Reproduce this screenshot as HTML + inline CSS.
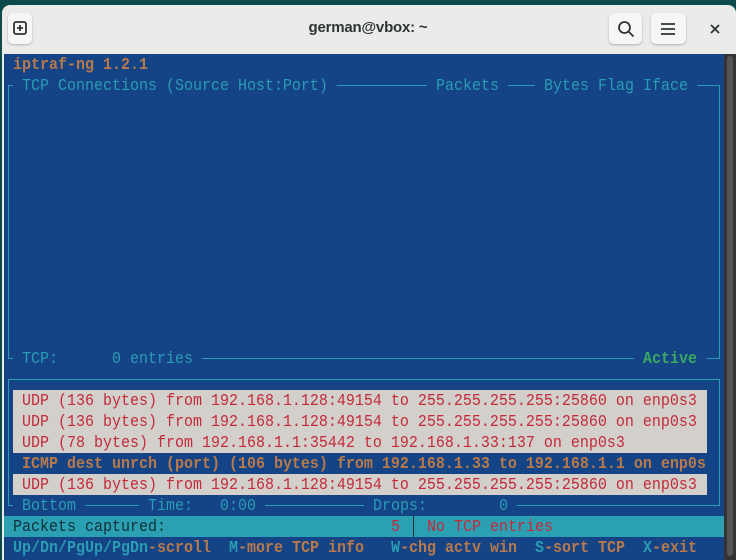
<!DOCTYPE html>
<html><head><meta charset="utf-8"><style>
*{margin:0;padding:0;box-sizing:border-box}
body{width:736px;height:560px;overflow:hidden;background:#0d4a4a;position:relative;font-family:"Liberation Mono",monospace}
.win{position:absolute;left:2px;top:5px;width:734px;height:555px;background:#ebebea;border-radius:8px 8px 0 0}
.btn{position:absolute;background:#f6f6f5;border-radius:5px;box-shadow:0 1px 2px rgba(0,0,0,.25)}
.title{position:absolute;left:0;width:736px;top:19px;text-align:center;font:15px "Liberation Sans",sans-serif;color:#2e3436;font-weight:bold;letter-spacing:-0.2px}
.term{position:absolute;left:4px;top:54px;width:720px;height:506px;background:#144386}
.sb{position:absolute;left:724px;top:54px;width:12px;height:506px;background:#333}
.t{position:absolute;font-size:17px;line-height:21px;padding-top:1px;white-space:pre;height:21px;transform:scaleX(.882);transform-origin:0 0}
.c{color:#2a9cb3}.o{color:#b87a4a;font-weight:bold}.r{color:#c42a3a}.g{color:#3aa860;font-weight:bold}
.ln{position:absolute;background:#2a9cb3}
.gr{position:absolute;left:13px;width:694px;height:21px;background:#d3d0cc}
</style></head><body>
<div class="win"></div>
<div class="btn" style="left:8px;top:13px;width:24px;height:31px"></div>
<svg style="position:absolute;left:12px;top:20px" width="16" height="16"><rect x="2" y="2" width="12" height="12" rx="2" fill="none" stroke="#2e3436" stroke-width="1.8"/><path d="M8 5v6M5 8h6" stroke="#2e3436" stroke-width="1.8"/></svg>
<div class="title">german@vbox: ~</div>
<div class="btn" style="left:609px;top:13px;width:33px;height:31px"></div>
<svg style="position:absolute;left:617px;top:20px" width="18" height="18"><circle cx="7.5" cy="7.5" r="5.5" fill="none" stroke="#2e3436" stroke-width="1.8"/><path d="M11.5 11.5l5 5" stroke="#2e3436" stroke-width="1.8"/></svg>
<div class="btn" style="left:651px;top:13px;width:35px;height:31px"></div>
<svg style="position:absolute;left:660px;top:21px" width="16" height="16"><path d="M1 3h14M1 8h14M1 13h14" stroke="#2e3436" stroke-width="1.8"/></svg>
<svg style="position:absolute;left:710px;top:24px" width="10" height="10"><path d="M1 1l8 8M9 1l-8 8" stroke="#2e3436" stroke-width="1.8"/></svg>

<div class="term"></div>
<div class="sb"><div style="position:absolute;left:3px;top:2px;width:6px;height:500px;background:#555;border-radius:3px"></div></div>

<div class="ln" style="left:8px;top:85px;width:712px;height:1px"></div>
<div class="ln" style="left:8px;top:85px;width:1px;height:274px"></div>
<div class="ln" style="left:719px;top:85px;width:1px;height:274px"></div>
<div class="ln" style="left:8px;top:358px;width:712px;height:1px"></div>
<div class="ln" style="left:8px;top:379px;width:712px;height:1px"></div>
<div class="ln" style="left:8px;top:379px;width:1px;height:127px"></div>
<div class="ln" style="left:719px;top:379px;width:1px;height:127px"></div>
<div class="ln" style="left:8px;top:505px;width:712px;height:1px"></div>

<div class="t o" style="left:13px;top:54px">iptraf-ng 1.2.1</div>
<div class="t c" style="left:13px;top:75px;background:#144386"> TCP Connections (Source Host:Port) </div>
<div class="t c" style="left:427px;top:75px;background:#144386"> Packets </div>
<div class="t c" style="left:535px;top:75px;background:#144386"> Bytes Flag Iface </div>

<div class="t c" style="left:13px;top:348px;background:#144386"> TCP:      0 entries </div>
<div class="t g" style="left:634px;top:348px;background:#144386"> Active </div>

<div class="gr" style="top:390px"></div>
<div class="gr" style="top:411px"></div>
<div class="gr" style="top:432px"></div>
<div class="gr" style="top:474px"></div>
<div class="t r" style="left:22px;top:390px">UDP (136 bytes) from 192.168.1.128:49154 to 255.255.255.255:25860 on enp0s3</div>
<div class="t r" style="left:22px;top:411px">UDP (136 bytes) from 192.168.1.128:49154 to 255.255.255.255:25860 on enp0s3</div>
<div class="t r" style="left:22px;top:432px">UDP (78 bytes) from 192.168.1.1:35442 to 192.168.1.33:137 on enp0s3</div>
<div class="t o" style="left:22px;top:453px">ICMP dest unrch (port) (106 bytes) from 192.168.1.33 to 192.168.1.1 on enp0s</div>
<div class="t r" style="left:22px;top:474px">UDP (136 bytes) from 192.168.1.128:49154 to 255.255.255.255:25860 on enp0s3</div>

<div class="t c" style="left:13px;top:495px;background:#144386"> Bottom </div>
<div class="t c" style="left:139px;top:495px;background:#144386"> Time:   0:00 </div>
<div class="t c" style="left:364px;top:495px;background:#144386"> Drops:        0 </div>

<div style="position:absolute;left:4px;top:516px;width:720px;height:21px;background:#2aa0b2"></div>
<div class="t" style="left:13px;top:516px;color:#10303a">Packets captured:</div>
<div class="t r" style="left:391px;top:516px">5</div>
<div style="position:absolute;left:413px;top:516px;width:1px;height:21px;background:#10303a"></div>
<div class="t r" style="left:427px;top:516px">No TCP entries</div>

<div class="t" style="left:13px;top:537px;font-weight:bold"><span class="c">Up/Dn/PgUp/PgDn</span><span class="o">-scroll</span></div>
<div class="t" style="left:229px;top:537px;font-weight:bold"><span class="c">M</span><span class="o">-more TCP info</span></div>
<div class="t" style="left:391px;top:537px;font-weight:bold"><span class="c">W</span><span class="o">-chg actv win</span></div>
<div class="t" style="left:535px;top:537px;font-weight:bold"><span class="c">S</span><span class="o">-sort TCP</span></div>
<div class="t" style="left:643px;top:537px;font-weight:bold"><span class="c">X</span><span class="o">-exit</span></div>
</body></html>
